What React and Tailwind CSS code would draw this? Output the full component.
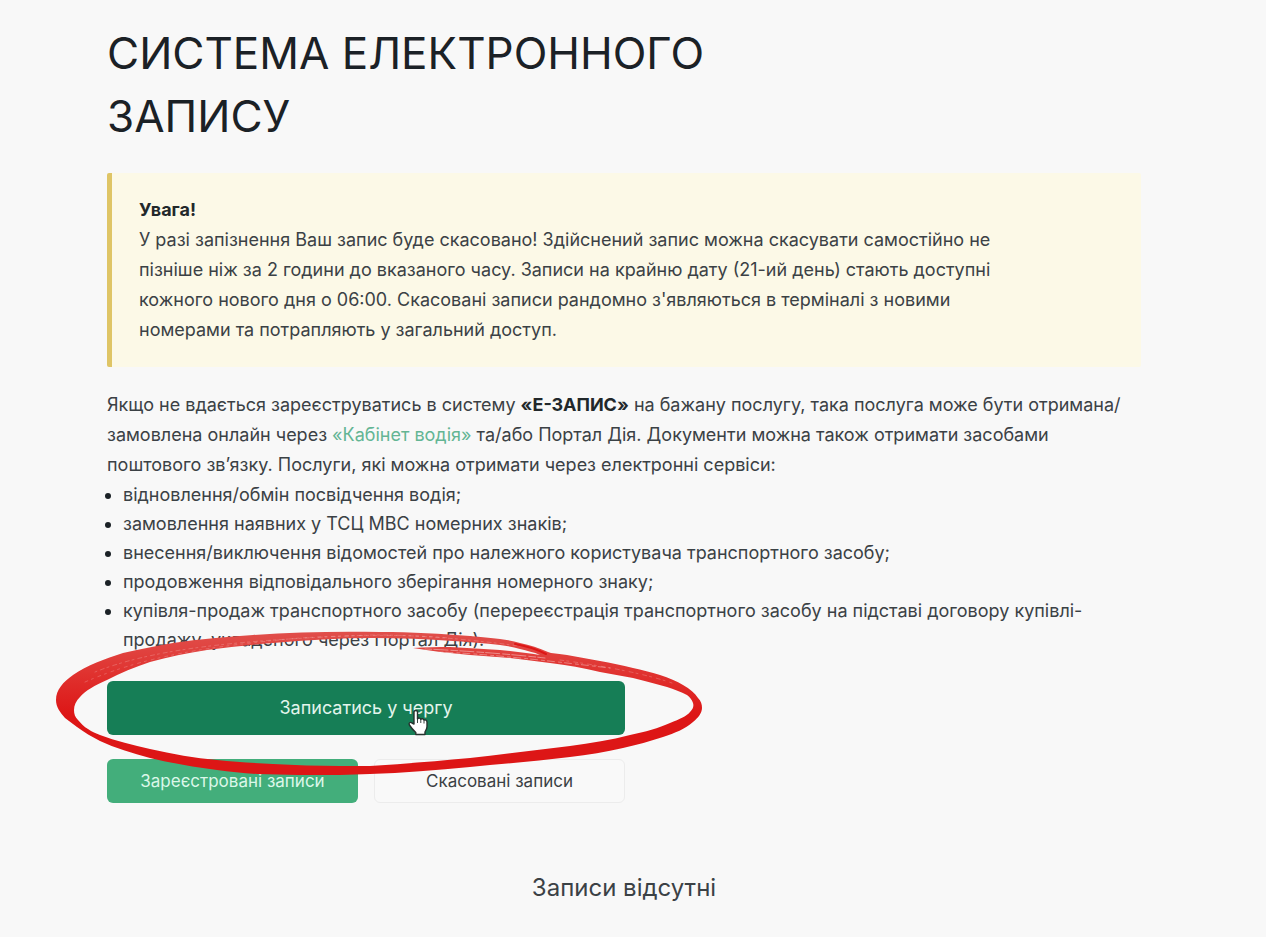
import React from 'react'

const SERVICES = [
  'відновлення/обмін посвідчення водія;',
  'замовлення наявних у ТСЦ МВС номерних знаків;',
  'внесення/виключення відомостей про належного користувача транспортного засобу;',
  'продовження відповідального зберігання номерного знаку;',
]

// hand-drawn marker ring around the main button
function MarkerRing() {
  return (
    <svg
      className="pointer-events-none absolute -left-[67px] -top-[61px] h-[170px] w-[680px] max-w-none"
      viewBox="40 620 680 170"
      aria-hidden="true"
    >
      <defs>
        <linearGradient id="marker" x1="0" y1="630" x2="0" y2="715" gradientUnits="userSpaceOnUse">
          <stop offset="0" stopColor="#e0504c" />
          <stop offset="0.5" stopColor="#e03330" />
          <stop offset="1" stopColor="#dd1616" />
        </linearGradient>
      </defs>
      <path
        fill="url(#marker)"
        d="M56 700 C56 690 63 682 73 675 C87 665 105 659 123 653 C140 649 156 646 173 643
           C200 639 226 637 253 635 C295 632 340 631 380 632 C412 632 442 634 470 636
           C481 637 491 638 500 639 C507 640 514 641 520 643 C530 645 539 648 548 652
           L551 653 C557 654 562 654 567 655 C578 657 589 659 600 661 C611 663 622 665 633 668
           C642 670 651 672 660 675 C669 678 677 681 683 685 C690 689 695 693 698 698
           C701 701 702 704 702 708 C702 713 698 718 693 722 C685 729 675 733 663 737
           C650 741 637 745 623 748 C606 752 588 755 570 757 C537 761 503 764 470 767
           C437 770 403 773 370 774 L340 775 C312 775 284 775 257 774 C243 773 230 772 217 770
           C194 767 171 763 150 758 C132 753 115 748 100 741 C92 737 84 732 77 727
           L65 718 C60 712 56 707 56 700 Z
           M74 710 C74 714 75 717 78 720 C81 723 84 727 88 729 C92 732 96 733 100 735
           C116 741 133 745 150 749 C172 754 195 758 217 760 C236 762 255 763 273 764
           C295 765 318 766 340 766 L370 766 C403 764 437 761 470 758
           C503 754 537 750 570 746 C591 743 611 740 630 735 C645 732 659 728 670 723
           C680 719 687 716 690 712 C693 709 694 706 693 703 C692 700 690 697 687 695
           C681 692 674 689 667 687 C656 684 645 681 633 678 C622 676 611 674 600 672
           C584 668 567 665 550 663 C537 661 524 660 510 658 C497 657 484 656 470 655
           C450 653 430 651 413 648 C426 647 438 647 450 647 C467 648 484 649 500 650
           C513 651 527 653 540 655 C534 652 527 651 520 649 C514 647 507 646 500 645
           C485 643 469 642 453 641 C427 639 400 638 373 638 C340 638 306 640 273 643
           C251 645 229 647 207 650 C187 653 168 657 150 662 C135 667 120 673 107 680
           C95 685 85 691 80 697 C76 701 74 705 74 710 Z"
        fillRule="evenodd"
      />
      {/* dry streaks left by the marker */}
      <g fill="none" stroke="#fff" strokeLinecap="round" strokeWidth="1">
        <path opacity="0.2" strokeDasharray="2 4 4 3" d="M95 672 C150 650 230 640 373 635 C430 635 480 641 520 646" />
        <path opacity="0.2" strokeDasharray="3 4 2 5" d="M85 682 C140 658 200 647 300 638 C350 635 400 634 450 638" />
        <path opacity="0.4" strokeDasharray="7 2 14 3" d="M425 649 C450 650 500 653 545 658" />
        <path opacity="0.35" strokeDasharray="3 3 7 4" d="M440 652 C490 654 550 661 610 668" />
        <path opacity="0.2" strokeDasharray="4 3 2 5" d="M560 660 C590 664 640 672 672 683" />
      </g>
      <path
        fill="none"
        stroke="#dd1616"
        strokeWidth="2"
        strokeLinecap="round"
        d="M515 644 C527 646 538 650 546 654"
      />
    </svg>
  )
}

function HandPointer() {
  return (
    <svg
      className="pointer-events-none absolute left-[58%] top-[28px] h-[27px] w-[22px]"
      viewBox="0 0 22 27"
      aria-hidden="true"
    >
      <path
        d="M7 15 V3 C7 1 10.5 1 10.5 3 V10 C11 8.6 13.6 8.8 13.8 10.4 C14.5 9.3 16.6 9.6 17 11.2
           C18 10.4 20 11 20 13 V17.5 C20 20 18.5 21.5 18 23 V25.5 H8.8 V23.5 C6.5 21.5 4 18.5 2.4 16
           C1.2 14 3.4 12.6 5 14 Z"
        fill="#fff"
        stroke="#26322e"
        strokeWidth="1.4"
        strokeLinejoin="round"
      />
      <path d="M10.5 10 V14 M13.8 10.5 V14 M17 11.5 V14.5" stroke="#26322e" strokeWidth="0.9" />
    </svg>
  )
}

function App() {
  return (
    <main className="min-h-screen bg-[#f8f8f8] pt-[22px] pr-[125px] pb-5 pl-[107px] font-['Inter',sans-serif] text-lg text-[#3b4145]">
      <h1 className="max-w-[640px] text-[44px] leading-[63px] text-[#1b2126]">
        СИСТЕМА ЕЛЕКТРОННОГО ЗАПИСУ
      </h1>

      <section className="mt-[25px] rounded-xs border-l-[5px] border-[#dfc566] bg-[#fcf9e7] py-[22px] pl-[27px] leading-[30px]">
        <strong className="block font-bold text-[#22282b]">Увага!</strong>
        <p className="max-w-[880px]">
          У разі запізнення Ваш запис буде скасовано! Здійснений запис можна скасувати самостійно не
          пізніше ніж за 2 години до вказаного часу. Записи на крайню дату (21-ий день) стають доступні
          кожного нового дня о 06:00. Скасовані записи рандомно з'являються в терміналі з новими
          номерами та потрапляють у загальний доступ.
        </p>
      </section>

      <p className="mt-[23px] leading-[30px]">
        Якщо не вдається зареєструватись в систему{' '}
        <strong className="font-bold text-[#22282b]">«Е-ЗАПИС»</strong> на бажану послугу, така послуга може бути отримана/<wbr />замовлена
        онлайн через <a href="#cabinet" className="text-[#63b594]">«Кабінет водія»</a> та/або
        Портал Дія. Документи можна також отримати засобами
        <br />
        поштового зв’язку. Послуги, які можна отримати через електронні сервіси:
      </p>
      <ul className="list-disc pl-4 leading-[29px] marker:text-[#1b2126]">
        {SERVICES.map(item => (
          <li key={item}>{item}</li>
        ))}
        <li>
          купівля-продаж транспортного засобу (перереєстрація транспортного засобу на підставі договору купівлі-продажу,
          укладеного через Портал Дія).
        </li>
      </ul>

      <div className="relative mt-[27px] flex max-w-[518px] flex-col gap-6">
        <button type="button" className="h-[54px] cursor-pointer rounded-md bg-[#167e56] text-[#e3f5ec]">
          Записатись у чергу
        </button>
        <div className="grid grid-cols-2 gap-4 text-[17px]">
          <button type="button" className="h-11 cursor-pointer rounded-md bg-[#43ae7b] text-[#dcf7e9]">
            Зареєстровані записи
          </button>
          <button type="button" className="h-11 cursor-pointer rounded-md border border-[#ececec] bg-[#f9f9f9]">
            Скасовані записи
          </button>
        </div>
        <MarkerRing />
        <HandPointer />
      </div>

      <p className="mt-[67px] text-center text-2xl leading-9">Записи відсутні</p>
    </main>
  )
}

export default App
